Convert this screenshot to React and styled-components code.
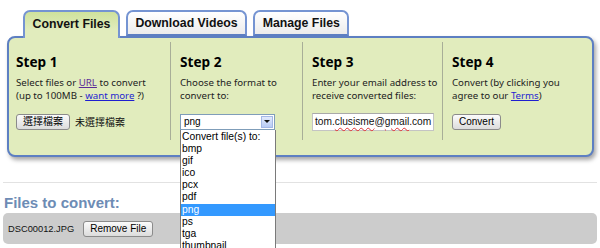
import React from 'react';
import styled, { createGlobalStyle } from 'styled-components';

const GlobalStyle = createGlobalStyle`
  html, body {
    margin: 0;
    padding: 0;
    background: #fff;
  }
  body {
    width: 600px;
    height: 248px;
    overflow: hidden;
    font-family: "Noto Sans", "Liberation Sans", sans-serif;
  }
`;

const Page = styled.div`
  padding: 10px 3px 0 3px;
`;

const TabBar = styled.div`
  display: flex;
  gap: 6px;
  padding-left: 20px;
  height: 26px;
  position: relative;
  z-index: 2;
`;

const Tab = styled.div`
  box-sizing: border-box;
  height: ${p => (p.$active ? '28px' : '26px')};
  padding: 0 7.5px;
  display: flex;
  align-items: center;
  justify-content: center;
  border: 2px solid #7594d2;
  border-bottom: ${p => (p.$active ? 'none' : '2px solid #5d7fc2')};
  border-radius: 7px 7px 0 0;
  background: ${p =>
    p.$active
      ? 'linear-gradient(#cfe29c, #e1ecbd 70%)'
      : 'linear-gradient(#ffffff, #ececec)'};
  font: bold 12.3px "Liberation Sans", Arial, sans-serif;
  color: #111;
  padding-bottom: ${p => (p.$active ? '2px' : '0')};
`;

const Panel = styled.div`
  margin: 0 3px 0 4px;
  border: 2px solid #5d7fc2;
  border-radius: 8px;
  background: #e1ecbd;
  box-shadow: 2px 3px 4px rgba(0, 0, 0, 0.35);
  padding: 4px 0 15px 0;
  position: relative;
  z-index: 1;
`;

const Steps = styled.div`
  display: grid;
  grid-template-columns: 161px 132px 140px 1fr;
`;

const Step = styled.div`
  box-sizing: border-box;
  height: 98px;
  padding: 11px 8px 0 ${p => (p.$first ? '7px' : '9px')};
  border-left: ${p => (p.$first ? 'none' : '1px solid #a8ae98')};
`;

const StepTitle = styled.h2`
  margin: 0 0 7px;
  font: bold 13.6px/17px "Noto Sans", sans-serif;
  color: #000;
`;

const StepText = styled.p`
  margin: 0 0 11px;
  height: 25px;
  font-size: 9.7px;
  line-height: 12.5px;
  color: #222;
  white-space: nowrap;
`;

const Link = styled.a`
  color: ${p => (p.$visited ? '#5b2c98' : '#1f1fd0')};
  text-decoration: underline;
`;

const Controls = styled.div`
  display: flex;
  align-items: center;
  gap: 5px;
  height: 17px;
`;

const Button = styled.button`
  box-sizing: border-box;
  height: 16px;
  padding: 0 6px;
  border: 1px solid #8b8b8b;
  border-radius: 3px;
  background: linear-gradient(#fbfbfb, #dcdcdc);
  font: 10px/14px "Liberation Sans", Arial, "Noto Sans CJK TC", sans-serif;
  color: #000;
  cursor: pointer;
`;

const NoFile = styled.span`
  font: 10px "Noto Sans CJK TC", sans-serif;
  color: #111;
`;

const SelectWrap = styled.div`
  position: relative;
  width: 95px;
`;

const SelectBox = styled.div`
  box-sizing: border-box;
  display: flex;
  align-items: center;
  height: 16px;
  border: 1px solid #7f9db9;
  background: #fff;
  font: 10px "Liberation Sans", Arial, sans-serif;
`;

const SelectValue = styled.span`
  flex: 1;
  padding-left: 3px;
`;

const SelectArrow = styled.span`
  box-sizing: border-box;
  width: 12px;
  height: 12px;
  margin-right: 1px;
  border: 1px solid #a4b8e6;
  background: linear-gradient(#e2eafc, #b8cbf5);
  display: flex;
  align-items: center;
  justify-content: center;

  &::after {
    content: '';
    border-left: 3px solid transparent;
    border-right: 3px solid transparent;
    border-top: 3px solid #111;
  }
`;

const DropList = styled.ul`
  position: absolute;
  top: 100%;
  left: 0;
  width: 96px;
  box-sizing: border-box;
  margin: 0;
  padding: 1px 0 0;
  list-style: none;
  background: #fff;
  border: 1px solid #7a7a7a;
  border-top: none;
  z-index: 10;
`;

const Option = styled.li`
  height: 12.2px;
  line-height: 12.2px;
  padding-left: 1px;
  font: 10.3px "Liberation Sans", Arial, sans-serif;
  color: ${p => (p.$selected ? '#fff' : '#000')};
  background: ${p => (p.$selected ? '#3399ff' : 'transparent')};
`;

const EmailField = styled.div`
  box-sizing: border-box;
  width: 125px;
  height: 18px;
  padding: 0 2px;
  border: 1px solid #c4c4c4;
  border-top-color: #a9a9a9;
  background: #fff;
  font: 10.2px/16px "Liberation Sans", Arial, sans-serif;
  color: #111;
  white-space: nowrap;
`;

const Misspelled = styled.span`
  text-decoration: underline wavy #e03030;
  text-decoration-thickness: 1px;
  text-underline-offset: 2px;
`;

const Rule = styled.hr`
  margin: 25px 0 0;
  border: none;
  border-top: 1px solid #e2e2e2;
`;

const SectionTitle = styled.h3`
  margin: 11px 0 1px;
  padding-left: 1px;
  font: bold 15px/18px "Liberation Sans", Arial, sans-serif;
  color: #6d8cb5;
`;

const FileBar = styled.div`
  display: flex;
  align-items: center;
  gap: 9px;
  height: 31px;
  padding-left: 5px;
  background: #cccccc;
  border-radius: 5px;
`;

const FileName = styled.span`
  font: 9.3px "Liberation Sans", Arial, sans-serif;
  color: #111;
`;

const formats = ['Convert file(s) to:', 'bmp', 'gif', 'ico', 'pcx', 'pdf', 'png', 'ps', 'tga', 'thumbnail'];

export default function App() {
  return (
    <>
      <GlobalStyle />
      <Page>
        <TabBar>
          <Tab $active>Convert Files</Tab>
          <Tab>Download Videos</Tab>
          <Tab>Manage Files</Tab>
        </TabBar>
        <Panel>
          <Steps>
            <Step $first>
              <StepTitle>Step 1</StepTitle>
              <StepText>
                Select files or <Link $visited href="#">URL</Link> to convert<br />
                (up to 100MB - <Link href="#">want more</Link> ?)
              </StepText>
              <Controls>
                <Button>選擇檔案</Button>
                <NoFile>未選擇檔案</NoFile>
              </Controls>
            </Step>
            <Step>
              <StepTitle>Step 2</StepTitle>
              <StepText>
                Choose the format to<br />
                convert to:
              </StepText>
              <Controls>
                <SelectWrap>
                  <SelectBox>
                    <SelectValue>png</SelectValue>
                    <SelectArrow />
                  </SelectBox>
                  <DropList>
                    {formats.map(f => (
                      <Option key={f} $selected={f === 'png'}>{f}</Option>
                    ))}
                  </DropList>
                </SelectWrap>
              </Controls>
            </Step>
            <Step>
              <StepTitle>Step 3</StepTitle>
              <StepText>
                Enter your email address to<br />
                receive converted files:
              </StepText>
              <Controls>
                <EmailField>
                  tom.<Misspelled>clusisme</Misspelled>@<Misspelled>gmail</Misspelled>.com
                </EmailField>
              </Controls>
            </Step>
            <Step>
              <StepTitle>Step 4</StepTitle>
              <StepText>
                Convert (by clicking you<br />
                agree to our <Link href="#">Terms</Link>)
              </StepText>
              <Controls>
                <Button>Convert</Button>
              </Controls>
            </Step>
          </Steps>
        </Panel>
        <Rule />
        <SectionTitle>Files to convert:</SectionTitle>
        <FileBar>
          <FileName>DSC00012.JPG</FileName>
          <Button>Remove File</Button>
        </FileBar>
      </Page>
    </>
  );
}
